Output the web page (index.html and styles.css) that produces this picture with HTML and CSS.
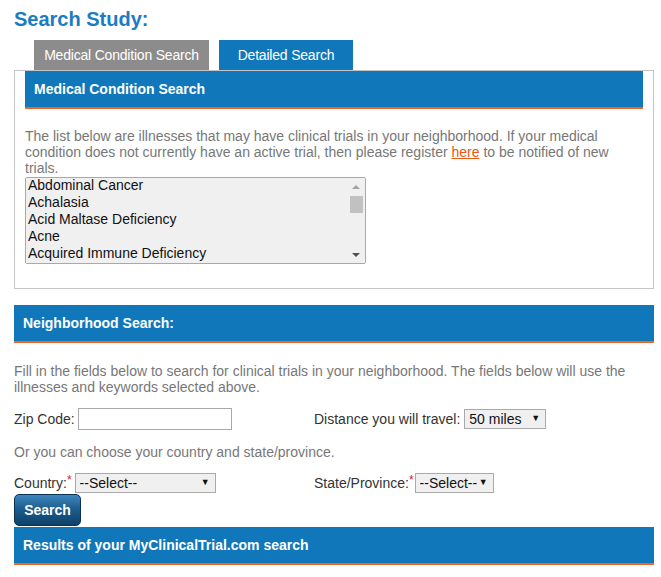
FILE: index.html
```html
<!DOCTYPE html>
<html lang="en">
<head>
  <meta charset="UTF-8" />
  <title>Search Study</title>
  <link rel="stylesheet" href="styles.css">
</head>
<body>

  <div class="page">
    <h1>Search Study:</h1>

    <!-- Tabs -->
    <div class="tabs">
      <span class="tab tab-off">Medical Condition Search</span>
      <span class="tab tab-on">Detailed Search</span>
    </div>

    <!-- Medical condition panel -->
    <div class="panel">
      <div class="bar">Medical Condition Search</div>
      <p class="note">The list below are illnesses that may have clinical trials in your neighborhood. If your medical condition does not currently have an active trial, then please register <a href="#">here</a> to be notified of new trials.</p>
      <div class="listwrap">
        <select class="conditions" size="5" multiple>
          <option>Abdominal Cancer</option>
          <option>Achalasia</option>
          <option>Acid Maltase Deficiency</option>
          <option>Acne</option>
          <option>Acquired Immune Deficiency</option>
          <option>Acromegaly</option>
          <option>Actinic Keratosis</option>
          <option>Acute Bronchitis</option>
          <option>Acute Coronary Syndrome</option>
          <option>Acute Lymphoblastic Leukemia</option>
        </select>
        <!-- scrollbar drawn by hand, headless hides the native one -->
        <span class="scroll">
          <span class="arrow arrow-up"></span>
          <span class="thumb"></span>
          <span class="arrow arrow-down"></span>
        </span>
      </div>
    </div>

    <!-- Neighborhood section -->
    <div class="bar bar-wide">Neighborhood Search:</div>
    <p class="note note-wide">Fill in the fields below to search for clinical trials in your neighborhood. The fields below will use the illnesses and keywords selected above.</p>

    <div class="row">
      <label class="field">Zip Code: <input type="text" class="zip" /></label>
      <label class="field">Distance you will travel:
        <span class="pick pick-miles"><select><option>50 miles</option><option>100 miles</option></select></span>
      </label>
    </div>

    <p class="note note-wide or">Or you can choose your country and state/province.</p>

    <div class="row row-country">
      <label class="field">Country:<span class="req">*</span>
        <span class="pick pick-country"><select><option>--Select--</option></select></span>
      </label>
      <label class="field">State/Province:<span class="req">*</span><span class="pick pick-state"><select><option>--Select--</option></select></span>
      </label>
    </div>

    <button class="go">Search</button>

    <div class="bar bar-wide">Results of your MyClinicalTrial.com search</div>
  </div>

</body>
</html>
```

FILE: styles.css
```css
body {
  margin: 0;
  background: #fff;
  font-family: "Liberation Sans", Arial, sans-serif;
  font-size: 14px;
  color: #333;
}

.page {
  width: 640px;
  padding: 8px 0 0 14px;
}

h1 {
  margin: 0;
  font-size: 20px;
  line-height: 22px;
  color: #1c7cc2;
}

.tabs {
  display: flex;
  gap: 10px;
  margin: 10px 0 0 20px;
}

.tab {
  display: block;
  height: 30px;
  line-height: 30px;
  color: #fff;
  font-size: 14px;
  letter-spacing: -0.2px;
  text-align: center;
}

.tab-off {
  width: 175px;
  background: #8c8c8c;
}

.tab-on {
  width: 134px;
  background: #1177bb;
}

.panel {
  border: 1px solid #c4c4c4;
  padding: 0 10px 24px;
}

.bar {
  height: 36px;
  line-height: 36px;
  padding-left: 9px;
  background: #1177bb;
  border-bottom: 2px solid #f26522;
  color: #fff;
  font-weight: bold;
  font-size: 14px;
}

.bar-wide {
  margin-top: 16px;
}

.note {
  margin: 19px 0 0;
  line-height: 16px;
  color: #777;
}

.note a {
  color: #e8580e;
}

.note-wide {
  margin-top: 20px;
}

.listwrap {
  position: relative;
  width: 341px;
}

.conditions {
  display: block;
  width: 341px;
  height: 87px;
  margin: 1px 0 0;
  padding: 0;
  border: 1px solid #a9a9a9;
  background: #f0f0f0;
  font-family: "Liberation Sans", Arial, sans-serif;
  font-size: 14px;
  color: #111;
  overflow-y: scroll;
  scrollbar-width: none;
}

.conditions option {
  padding: 0 2px;
  line-height: 17px;
  height: 17px;
  margin-top: -1px;
  margin-bottom: 1px;
}

.scroll {
  position: absolute;
  top: 2px;
  right: 1px;
  bottom: 1px;
  width: 17px;
  background: #f0f0f0;
}

.arrow {
  position: absolute;
  left: 4px;
  width: 0;
  height: 0;
  border-left: 4px solid transparent;
  border-right: 4px solid transparent;
}

.arrow-up {
  top: 6px;
  border-bottom: 4px solid #a3a3a3;
}

.arrow-down {
  bottom: 6px;
  border-top: 4px solid #505050;
}

.thumb {
  position: absolute;
  top: 17px;
  left: 2px;
  width: 13px;
  height: 17px;
  background: #c1c1c1;
}

.row {
  display: grid;
  grid-template-columns: 300px 1fr;
  align-items: center;
  margin-top: 13px;
  color: #333;
}

.row-country {
  margin-top: 13px;
}

.or {
  margin-top: 14px;
}

.field {
  display: flex;
  align-items: center;
  white-space: nowrap;
}

.zip {
  width: 150px;
  height: 18px;
  margin-left: 3px;
  padding: 1px;
  border: 1px solid #a9a9a9;
}

.req {
  color: #e0191f;
  font-size: 12px;
  position: relative;
  top: -3px;
}

.pick {
  position: relative;
  display: inline-block;
  margin-left: 4px;
}

.pick select {
  appearance: none;
  -webkit-appearance: none;
  height: 20px;
  padding: 0 0 0 4px;
  border: 1px solid #a9a9a9;
  border-radius: 0;
  background: #f0f0f0;
  font-family: "Liberation Sans", Arial, sans-serif;
  font-size: 14px;
  color: #111;
}

.pick::after {
  content: "\25BC";
  position: absolute;
  right: 6px;
  top: 4px;
  font-size: 9px;
  color: #111;
  pointer-events: none;
}

.pick-miles select {
  width: 82px;
}

.pick-country {
  margin-left: 3px;
}

.pick-country select {
  width: 141px;
}

.pick-state {
  margin-left: 1px;
}

.pick-state select {
  width: 79px;
}

.go {
  display: block;
  width: 67px;
  height: 32px;
  margin-top: 1px;
  border: 1px solid #0b3454;
  border-radius: 5px;
  background: linear-gradient(#3d85bd, #1b5b8c 50%, #0d4168);
  color: #fff;
  font-family: "Liberation Sans", Arial, sans-serif;
  font-weight: bold;
  font-size: 14px;
  padding: 0;
}

.go + .bar-wide {
  margin-top: 1px;
}
```
